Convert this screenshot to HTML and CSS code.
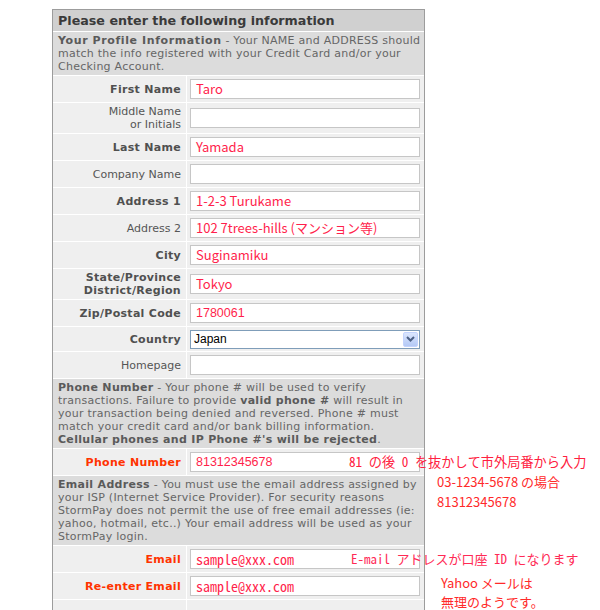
FILE: index.html
```html
<!DOCTYPE html>
<html lang="ja">
<head>
<meta charset="utf-8">
<title>Please enter the following information</title>
<link rel="stylesheet" href="styles.css">
</head>
<body>
<div class="panel">
  <div class="title">Please enter the following information</div>
  <div class="info"><b class="wide">Your Profile Information</b> - Your NAME and ADDRESS should<br>match the info registered with your Credit Card and/or your<br>Checking Account.</div>

  <div class="row"><div class="lbl b">First Name</div><div class="fld"><div class="inp">Taro</div></div></div>
  <div class="row tall"><div class="lbl">Middle Name<br>or Initials</div><div class="fld"><div class="inp"></div></div></div>
  <div class="row"><div class="lbl b">Last Name</div><div class="fld"><div class="inp">Yamada</div></div></div>
  <div class="row"><div class="lbl">Company Name</div><div class="fld"><div class="inp"></div></div></div>
  <div class="row"><div class="lbl b">Address 1</div><div class="fld"><div class="inp">1-2-3 Turukame</div></div></div>
  <div class="row"><div class="lbl">Address 2</div><div class="fld"><div class="inp">102 7trees-hills (マンション等)</div></div></div>
  <div class="row"><div class="lbl b">City</div><div class="fld"><div class="inp">Suginamiku</div></div></div>
  <div class="row tall"><div class="lbl b">State/Province<br>District/Region</div><div class="fld"><div class="inp">Tokyo</div></div></div>
  <div class="row"><div class="lbl b">Zip/Postal Code</div><div class="fld"><div class="inp num">1780061</div></div></div>
  <div class="row short"><div class="lbl b">Country</div><div class="fld"><div class="select"><span class="sel-text">Japan</span><span class="sel-btn"><svg width="9" height="6" viewBox="0 0 9 6"><path d="M1 1 L4.5 4.5 L8 1" fill="none" stroke="#4d6185" stroke-width="2"/></svg></span></div></div></div>
  <div class="row"><div class="lbl">Homepage</div><div class="fld"><div class="inp"></div></div></div>

  <div class="info"><b>Phone Number</b> - Your phone # will be used to verify<br>transactions. Failure to provide <b>valid phone #</b> will result in<br>your transaction being denied and reversed. Phone # must<br>match your credit card and/or bank billing information.<br><b>Cellular phones and IP Phone #'s will be rejected</b>.</div>
  <div class="row"><div class="lbl b red">Phone Number</div><div class="fld"><div class="inp num">81312345678</div></div></div>

  <div class="info"><b>Email Address</b> - You must use the email address assigned by<br>your ISP (Internet Service Provider). For security reasons<br>StormPay does not permit the use of free email addresses (ie:<br>yahoo, hotmail, etc..) Your email address will be used as your<br>StormPay login.</div>
  <div class="row"><div class="lbl b red">Email</div><div class="fld"><div class="inp mono">sample@xxx.com</div></div></div>
  <div class="row"><div class="lbl b red">Re-enter Email</div><div class="fld"><div class="inp mono">sample@xxx.com</div></div></div>
  <div class="row"><div class="lbl"></div><div class="fld"></div></div>
</div>

<div class="note n1">81 の後 0 を抜かして市外局番から入力</div>
<div class="note n2">03-1234-5678 の場合<br>81312345678</div>
<div class="note n3">E-mail アドレスが口座 ID になります</div>
<div class="note n4">Yahoo メールは<br>無理のようです。</div>
</body>
</html>
```

FILE: styles.css
```css
html, body {
  margin: 0;
  padding: 0;
  background: #ffffff;
}
body {
  position: relative;
  width: 600px;
  height: 610px;
  overflow: hidden;
  font-family: "DejaVu Sans", Verdana, sans-serif;
  font-size: 11px;
  line-height: 13px;
  color: #555555;
}
.panel {
  margin: 9px 0 0 52px;
  width: 373px;
  box-sizing: border-box;
  border: 1px solid #9c9c9c;
  border-bottom: none;
  background: #ffffff;
}
.title {
  height: 21px;
  box-sizing: border-box;
  padding: 3px 0 0 5px;
  background: #d0d0d0;
  color: #3a3a3a;
  font-family: "DejaVu Sans", sans-serif;
  font-weight: bold;
  font-size: 12.7px;
  line-height: 16px;
}
.info {
  margin-top: 1px;
  padding: 2px 0 2px 5px;
  background: #dcdcdc;
  color: #666666;
  white-space: nowrap;
  letter-spacing: 0.25px;
}
.info b {
  color: #5a5a5a;
  letter-spacing: 0.3px;
}
.info b.wide {
  letter-spacing: 0.6px;
}
.row {
  margin-top: 1px;
  display: grid;
  grid-template-columns: 133px 237px;
  column-gap: 1px;
  height: 26px;
}
.row.tall {
  height: 30px;
}
.row.short {
  height: 24px;
}
.lbl {
  background: #efefef;
  display: flex;
  align-items: center;
  justify-content: flex-end;
  text-align: right;
  padding-right: 5px;
  color: #555555;
}
.lbl.b {
  font-weight: bold;
  color: #505050;
  letter-spacing: 0.3px;
}
.lbl.red {
  color: #ff3300;
}
.fld {
  background: #efefef;
  display: flex;
  align-items: center;
  padding-left: 3px;
}
.inp {
  width: 230px;
  height: 20px;
  box-sizing: border-box;
  border: 1px solid #c6c6c6;
  background: #ffffff;
  padding-left: 5px;
  font-family: "Noto Sans CJK JP", sans-serif;
  font-size: 13px;
  line-height: 18px;
  color: #ff1f4c;
  white-space: nowrap;
  overflow: hidden;
}
.inp.num {
  font-family: "Liberation Sans", Arial, sans-serif;
  font-size: 12.5px;
}
.inp.mono {
  font-family: "Noto Sans Mono CJK JP", "Liberation Mono", monospace;
  font-size: 14px;
}
.select {
  width: 230px;
  height: 19px;
  box-sizing: border-box;
  border: 1px solid #7f9db9;
  background: #ffffff;
  display: flex;
  align-items: center;
  justify-content: space-between;
  font-family: "Liberation Sans", Arial, sans-serif;
  font-size: 12px;
  color: #000000;
}
.sel-text {
  padding-left: 3px;
}
.sel-btn {
  width: 15px;
  height: 15px;
  margin-right: 1px;
  box-sizing: border-box;
  border: 1px solid #c3d3fd;
  border-radius: 2px;
  background: linear-gradient(#dbe6fd, #b4c9f6);
  display: flex;
  align-items: center;
  justify-content: center;
}
.note {
  position: absolute;
  font-family: "Noto Sans Mono CJK JP", "Noto Sans CJK JP", sans-serif;
  font-size: 13px;
  line-height: 20px;
  color: #ff2a2a;
  white-space: nowrap;
}
.n1 { left: 349px; top: 452px; color: #ff2040; font-size: 13.2px; }
.n2 { left: 437px; top: 472px; font-family: "Noto Sans CJK JP", sans-serif; }
.n3 { left: 351px; top: 549px; color: #ff2a55; }
.n4 { left: 441px; top: 573px; line-height: 19px; font-family: "Noto Sans CJK JP", sans-serif; }
```
